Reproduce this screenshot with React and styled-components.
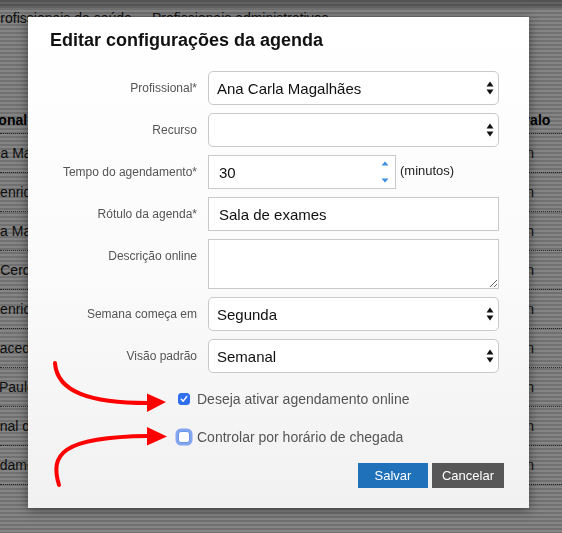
import { createGlobalStyle } from 'styled-components';
import styled from 'styled-components';

const rows = [
    { name: 'Ana Carla Magalhães', shift: -54, interval: '30 min' },
    { name: 'Henrique Souza', shift: -10, interval: '30 min' },
    { name: 'Ana Maria Lopes', shift: -17, interval: '30 min' },
    { name: 'Lucas Cerqueira', shift: -41, interval: '30 min' },
    { name: 'Henrique Alves', shift: -10, interval: '30 min' },
    { name: 'Macedo Rocha', shift: -12, interval: '30 min' },
    { name: 'Paulo Ribeiro', shift: -1, interval: '30 min' },
    { name: 'Profissional de Apoio', shift: -54, interval: '30 min' },
    { name: 'Agendamento Geral', shift: -33, interval: '30 min' },
];

const fields = [
    { label: 'Profissional*', kind: 'select', value: 'Ana Carla Magalhães' },
    { label: 'Recurso', kind: 'select', value: '' },
    { label: 'Tempo do agendamento*', kind: 'number', value: '30' },
    { label: 'Rótulo da agenda*', kind: 'text', value: 'Sala de exames' },
    { label: 'Descrição online', kind: 'textarea', value: '' },
    { label: 'Semana começa em', kind: 'select', value: 'Segunda' },
    { label: 'Visão padrão', kind: 'select', value: 'Semanal' },
];

function SelectArrows() {
    return (
        <ArrowIcon width="8" height="14" viewBox="0 0 8 14">
            <path d="M4 0.5 L7.5 5.5 L0.5 5.5 Z" fill="#111" />
            <path d="M4 13.5 L7.5 8.5 L0.5 8.5 Z" fill="#111" />
        </ArrowIcon>
    );
}

function Spinner() {
    return (
        <SpinIcon width="8" height="22" viewBox="0 0 8 22">
            <path d="M4 0.5 L7.5 4.5 L0.5 4.5 Z" fill="#3d8fe0" />
            <path d="M4 21.5 L7.5 17.5 L0.5 17.5 Z" fill="#3d8fe0" />
        </SpinIcon>
    );
}

function Field({ field }) {
    if (field.kind === 'select') {
        return (
            <SelectWrap>
                <Select defaultValue={field.value}>
                    <option value={field.value}>{field.value}</option>
                </Select>
                <SelectArrows />
            </SelectWrap>
        );
    }
    if (field.kind === 'number') {
        return (
            <NumberRow>
                <NumberWrap>
                    <TextInput type="text" inputMode="numeric" defaultValue={field.value} />
                    <Spinner />
                </NumberWrap>
                <Unit>(minutos)</Unit>
            </NumberRow>
        );
    }
    if (field.kind === 'textarea') {
        return <TextArea defaultValue={field.value} />;
    }
    return <TextInput type="text" defaultValue={field.value} />;
}

function CheckBox({ checked, focused }) {
    return (
        <Box $checked={checked} $focused={focused}>
            {checked && (
                <svg width="8" height="8" viewBox="0 0 8 8">
                    <path d="M1.3 4.2 L3.2 6.1 L6.7 1.6" fill="none" stroke="#fff" strokeWidth="1.5" strokeLinecap="round" strokeLinejoin="round" />
                </svg>
            )}
        </Box>
    );
}

export default function App() {
    return (
        <>
            <GlobalStyle />
            <Page>
                <NavBar />
                <Tabs>
                    <Tab $shift={-9}>Profissionais da saúde</Tab>
                    <Tab>Profissionais administrativos</Tab>
                </Tabs>
                <Table>
                    <HeadRow>
                        <NameCell $shift={-53}>Profissional</NameCell>
                        <IntervalCell>Intervalo</IntervalCell>
                    </HeadRow>
                    {rows.map((r, i) => (
                        <Row key={i}>
                            <NameCell $shift={r.shift}>{r.name}</NameCell>
                            <IntervalCell>{r.interval}</IntervalCell>
                        </Row>
                    ))}
                </Table>
            </Page>
            <Overlay />
            <Modal>
                <Title>Editar configurações da agenda</Title>
                <Form>
                    {fields.map((f) => (
                        <FormRow key={f.label}>
                            <Label>{f.label}</Label>
                            <Field field={f} />
                        </FormRow>
                    ))}
                </Form>
                <Checks>
                    <CheckRow>
                        <CheckBox checked />
                        <CheckText>Deseja ativar agendamento online</CheckText>
                    </CheckRow>
                    <CheckRow>
                        <CheckBox focused />
                        <CheckText>Controlar por horário de chegada</CheckText>
                    </CheckRow>
                </Checks>
                <Buttons>
                    <Button $color="#1f72b9" $width={70}>Salvar</Button>
                    <Button $color="#575757" $width={72}>Cancelar</Button>
                </Buttons>
            </Modal>
            <Annotations width="562" height="533" viewBox="0 0 562 533">
                <path d="M55 363 C 57 392 90 403 148 403" fill="none" stroke="#f00" strokeWidth="4" strokeLinecap="round" />
                <path d="M147 393.5 L166 402 L147 412 Z" fill="#f00" />
                <path d="M59 485 C 50 455 60 437 148 436" fill="none" stroke="#f00" strokeWidth="4" strokeLinecap="round" />
                <path d="M147 427 L167 436.5 L147 445.5 Z" fill="#f00" />
            </Annotations>
        </>
    );
}

const GlobalStyle = createGlobalStyle`
    html, body {
        margin: 0;
        height: 533px;
        overflow: hidden;
        font-family: "Liberation Sans", Arial, sans-serif;
    }
`;

const Page = styled.div`
    width: 562px;
    height: 533px;
    background: #fff;
    overflow: hidden;
`;

const NavBar = styled.div`
    height: 8px;
    background: #bdbdbd;
`;

const Tabs = styled.div`
    display: flex;
    gap: 20px;
    height: 20px;
    line-height: 20px;
    font-size: 14px;
    color: #222;
`;

const Tab = styled.span`
    margin-left: ${(p) => p.$shift || 0}px;
    white-space: nowrap;
`;

const Table = styled.div`
    margin-top: 79px;
    font-size: 14px;
    color: #1c1c1c;
`;

const HeadRow = styled.div`
    display: flex;
    justify-content: space-between;
    height: 26px;
    line-height: 26px;
    font-weight: bold;
    color: #000;
    border-bottom: 1px dotted #555;
`;

const Row = styled.div`
    display: flex;
    justify-content: space-between;
    height: 38px;
    line-height: 38px;
    border-bottom: 1px dotted #555;
`;

const NameCell = styled.div`
    margin-left: ${(p) => p.$shift}px;
    white-space: nowrap;
`;

const IntervalCell = styled.div`
    width: 70px;
    white-space: nowrap;
`;

const Overlay = styled.div`
    position: fixed;
    inset: 0;
    background: repeating-linear-gradient(
        to bottom,
        rgba(0, 0, 0, 0.56) 0px,
        rgba(0, 0, 0, 0.56) 2px,
        rgba(0, 0, 0, 0.48) 2px,
        rgba(0, 0, 0, 0.48) 4px
    );
`;

const Modal = styled.div`
    position: absolute;
    top: 17px;
    left: 28px;
    width: 501px;
    box-sizing: border-box;
    padding: 11px 25px 20px 22px;
    background: linear-gradient(to bottom, #ffffff 0%, #fbfbfb 50%, #f1f1f1 100%);
    box-shadow: 0 2px 10px rgba(0, 0, 0, 0.45);
    display: flex;
    flex-direction: column;
`;

const Title = styled.h1`
    margin: 0 0 19px;
    font-size: 18px;
    line-height: 24px;
    font-weight: bold;
    color: #111;
`;

const Form = styled.div`
    display: flex;
    flex-direction: column;
    gap: 8px;
`;

const FormRow = styled.div`
    display: grid;
    grid-template-columns: 147px 291px;
    column-gap: 11px;
    align-items: start;
`;

const Label = styled.label`
    padding-top: 9px;
    font-size: 12px;
    line-height: 16px;
    color: #555;
    text-align: right;
    white-space: nowrap;
`;

const SelectWrap = styled.div`
    position: relative;
    height: 34px;
`;

const Select = styled.select`
    appearance: none;
    width: 100%;
    height: 34px;
    box-sizing: border-box;
    padding: 0 24px 0 8px;
    border: 1px solid #c9c9c9;
    border-radius: 5px;
    background: #fff;
    font-family: "Liberation Sans", Arial, sans-serif;
    font-size: 15px;
    color: #111;
    outline: none;
`;

const ArrowIcon = styled.svg`
    position: absolute;
    right: 5px;
    top: 10px;
    pointer-events: none;
`;

const NumberRow = styled.div`
    display: flex;
    align-items: center;
    gap: 4px;
`;

const NumberWrap = styled.div`
    position: relative;
    width: 188px;
`;

const SpinIcon = styled.svg`
    position: absolute;
    right: 7px;
    top: 6px;
    pointer-events: none;
`;

const Unit = styled.span`
    font-size: 13px;
    color: #222;
    margin-top: -4px;
`;

const TextInput = styled.input`
    width: 100%;
    height: 34px;
    box-sizing: border-box;
    padding: 0 10px;
    border: 1px solid #c9c9c9;
    border-radius: 0;
    background: #fff;
    font-family: "Liberation Sans", Arial, sans-serif;
    font-size: 15px;
    color: #111;
    outline: none;
`;

const TextArea = styled.textarea`
    width: 100%;
    height: 50px;
    box-sizing: border-box;
    margin: 0;
    display: block;
    padding: 6px 10px;
    border: 1px solid #c9c9c9;
    background: #fff;
    font-family: "Liberation Sans", Arial, sans-serif;
    font-size: 15px;
    outline: none;
`;

const Checks = styled.div`
    display: flex;
    flex-direction: column;
    gap: 18px;
    margin: 16px 0 0 128px;
`;

const CheckRow = styled.label`
    display: flex;
    align-items: center;
    gap: 7px;
    height: 20px;
`;

const Box = styled.span`
    display: flex;
    align-items: center;
    justify-content: center;
    width: 12px;
    height: 12px;
    box-sizing: border-box;
    border-radius: 3px;
    background: ${(p) => (p.$checked ? '#2f6fee' : '#fff')};
    border: 1px solid ${(p) => (p.$checked ? '#2f6fee' : '#6a93e6')};
    box-shadow: ${(p) => (p.$focused ? '0 0 0 2.5px rgba(92, 140, 240, 0.75)' : 'none')};
    flex-shrink: 0;
`;

const CheckText = styled.span`
    font-size: 14px;
    color: #555;
    white-space: nowrap;
`;

const Buttons = styled.div`
    display: flex;
    justify-content: flex-end;
    gap: 4px;
    margin-top: 16px;
`;

const Button = styled.button`
    width: ${(p) => p.$width}px;
    height: 25px;
    padding: 0;
    border: none;
    background: ${(p) => p.$color};
    color: #fff;
    font-family: "Liberation Sans", Arial, sans-serif;
    font-size: 13px;
    cursor: pointer;
`;

const Annotations = styled.svg`
    position: absolute;
    top: 0;
    left: 0;
    pointer-events: none;
`;
